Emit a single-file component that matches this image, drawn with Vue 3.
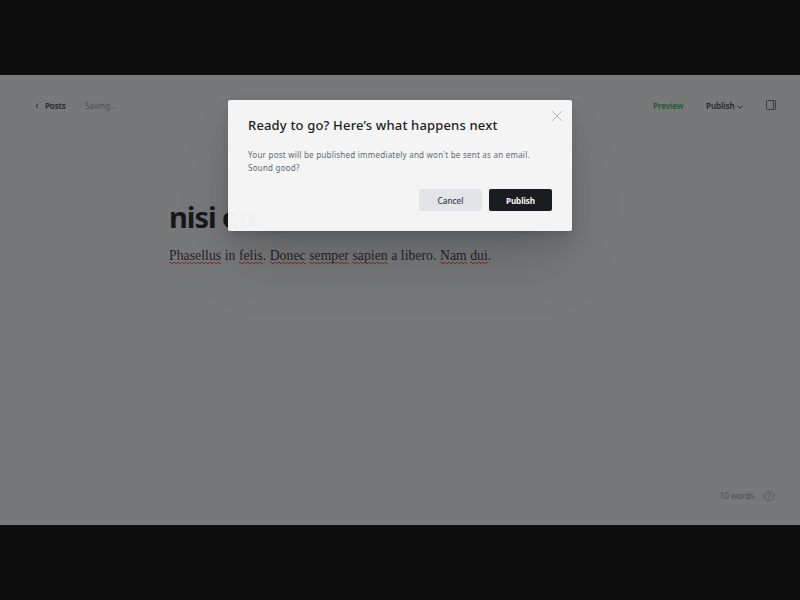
<script setup>
const words = [
  { text: 'Phasellus', flagged: true },
  { text: ' in ' },
  { text: 'felis', flagged: true },
  { text: '. ' },
  { text: 'Donec', flagged: true },
  { text: ' ' },
  { text: 'semper', flagged: true },
  { text: ' ' },
  { text: 'sapien', flagged: true },
  { text: ' a libero. ' },
  { text: 'Nam', flagged: true },
  { text: ' ' },
  { text: 'dui', flagged: true },
  { text: '.' },
]
</script>

<template>
  <div class="screen">
    <div class="editor">
      <header class="toolbar">
        <a class="back">
          <svg class="chevron-left" width="4" height="6" viewBox="0 0 4 6"><path d="M3.2 .6 1 3 3.2 5.4" /></svg>
          <span class="posts">Posts</span>
        </a>
        <span class="saving">Saving...</span>
        <span class="preview">Preview</span>
        <span class="publish-menu">
          <span class="publish-label">Publish</span>
          <svg width="6" height="4" viewBox="0 0 6 4"><path d="M.5 .7 3 3.1 5.5 .7" /></svg>
        </span>
        <svg class="sidebar-icon" width="10" height="10" viewBox="0 0 10 10"><rect x=".5" y=".5" width="9" height="9" rx=".8" /><path d="M7.4 .5v9" /></svg>
      </header>
      <main class="content">
        <h1 class="title">nisi eu</h1>
        <p class="paragraph"><span v-for="(word, i) in words" :key="i" :class="{ flagged: word.flagged }">{{ word.text }}</span></p>
      </main>
      <footer class="status">
        <span class="count">10 words</span>
        <svg width="12" height="12" viewBox="0 0 12 12"><circle cx="6" cy="6" r="4.9" /><path d="M4.5 4.9C4.5 2.9 7.5 2.9 7.5 4.8 7.5 6 6 5.9 6 7.2M6 8.1v.9" /></svg>
      </footer>
    </div>

    <section class="modal">
      <svg class="close" width="12" height="12" viewBox="0 0 12 12"><path d="M1 1 11 11M11 1 1 11" /></svg>
      <h2 class="heading">Ready to go? Here’s what happens next</h2>
      <p class="message">Your post will be published immediately and won't be sent as an email.<br>Sound good?</p>
      <div class="actions">
        <button class="button cancel">Cancel</button>
        <button class="button confirm">Publish</button>
      </div>
    </section>
  </div>
</template>

<style>
body {
  margin: 0;
  background: #0d0d0d;
}
</style>

<style scoped>
.screen {
  box-sizing: border-box;
  position: relative;
  width: 800px;
  height: 600px;
  padding: 75px 0;
  overflow: hidden;
  background: #0d0d0d;
  font-family: "Segoe UI", "Noto Sans", "Open Sans", sans-serif;
}
.editor {
  box-sizing: border-box;
  display: flex;
  flex-direction: column;
  height: 450px;
  background: #77787a;
}
svg {
  display: block;
  fill: none;
  stroke: #2d3136;
}
.toolbar {
  display: flex;
  align-items: center;
  height: 20px;
  padding: 21px 24px 0 35px;
  font-size: 8.2px;
  line-height: 20px;
  white-space: nowrap;
}
.back {
  display: flex;
  align-items: center;
  gap: 6px;
  width: 50px;
}
.chevron-left {
  margin-bottom: 1px;
}
.posts {
  color: #24272b;
  font-weight: 600;
  letter-spacing: -0.2px;
}
.saving {
  color: #4b5157;
  letter-spacing: -0.1px;
}
.preview {
  width: 53px;
  margin-left: auto;
  color: #1e5c2b;
  font-weight: 600;
  letter-spacing: -0.1px;
}
.publish-menu {
  display: flex;
  align-items: center;
  gap: 2px;
  width: 60px;
  color: #24272b;
  font-weight: 600;
  letter-spacing: -0.1px;
}
.publish-menu svg {
  margin-top: 2px;
}
.sidebar-icon {
  margin-bottom: 2px;
  stroke: #393d41;
}
.content {
  flex: 1;
  padding: 80px 0 0 169px;
}
.title {
  margin: 0;
  color: #16181a;
  font-size: 29px;
  font-weight: 700;
  line-height: 42px;
  letter-spacing: -1.05px;
}
.paragraph {
  margin: 9px 0 0;
  color: #222529;
  font-family: Georgia, "Liberation Serif", serif;
  font-size: 13.7px;
  line-height: 18px;
  letter-spacing: 0.05px;
  white-space: pre;
}
.flagged {
  padding-bottom: 1px;
  background:
    linear-gradient(45deg, transparent 38%, #86292e 38% 62%, transparent 62%) 0 100% / 4px 2.5px repeat-x,
    linear-gradient(-45deg, transparent 38%, #86292e 38% 62%, transparent 62%) 2px 100% / 4px 2.5px repeat-x;
}
.status {
  display: flex;
  align-items: center;
  justify-content: flex-end;
  gap: 9px;
  height: 20px;
  padding: 0 25px 19px 0;
  color: #4a5056;
  font-size: 8.2px;
}
.count {
  margin-bottom: 1px;
  letter-spacing: -0.1px;
}
.status svg {
  stroke: #4a5056;
  stroke-width: 0.8;
}
.modal {
  box-sizing: border-box;
  position: absolute;
  top: 100px;
  left: 228px;
  width: 344px;
  height: 130.5px;
  padding: 15px 20px 0;
  border-radius: 2px;
  background: rgba(247, 247, 247, 0.975);
  box-shadow: 0 1.5px 2px rgba(0, 0, 0, 0.04), 0 4px 10px rgba(0, 0, 0, 0.06),
    0 12px 22px rgba(0, 0, 0, 0.09), 0 38px 60px -4px rgba(0, 0, 0, 0.12);
}
.close {
  position: absolute;
  top: 10px;
  right: 9px;
  stroke: #9b9d9f;
  stroke-width: 0.7;
}
.heading {
  margin: 0;
  color: #1c1f22;
  font-size: 13px;
  font-weight: 500;
  line-height: 20px;
  letter-spacing: 0.17px;
  white-space: nowrap;
}
.message {
  margin: 13px 0 0;
  color: #626970;
  font-size: 8px;
  line-height: 13px;
  letter-spacing: 0.235px;
  white-space: nowrap;
}
.actions {
  display: flex;
  justify-content: flex-end;
  gap: 7px;
  margin-top: 15px;
}
.button {
  box-sizing: border-box;
  width: 63px;
  height: 22px;
  padding: 1px 0 0;
  border: 0;
  border-radius: 2px;
  font: 500 8.2px/20px "Segoe UI", "Noto Sans", "Open Sans", sans-serif;
  text-align: center;
}
.cancel {
  background: #e2e4e8;
  color: #394047;
}
.confirm {
  background: #1b1c20;
  color: #f4f4f4;
  font-weight: 700;
  letter-spacing: -0.1px;
}
</style>
